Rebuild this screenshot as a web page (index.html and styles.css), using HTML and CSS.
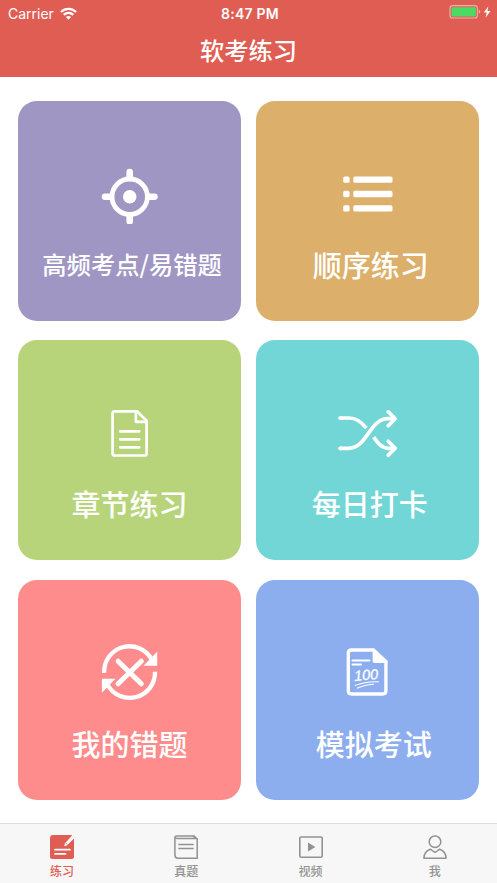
FILE: index.html
```html
<!DOCTYPE html>
<html lang="zh-CN">
<head>
  <meta charset="UTF-8">
  <meta name="viewport" content="width=device-width, initial-scale=1">
  <title>软考练习</title>
  <link rel="stylesheet" href="styles.css">
</head>
<body>
  <header>
    <div class="status">
      <div class="carrier">
        <span>Carrier</span>
        <svg class="wifi" width="17" height="13" viewBox="0 0 17 13" fill="none" stroke="#fff" stroke-width="2.3">
          <path d="M1 5C5.2 .9 11.8 .9 16 5"/>
          <path d="M3.8 7.9c2.6-2.6 6.8-2.6 9.4 0"/>
          <path d="M5.9 10.1c1.4-1.5 3.8-1.5 5.2 0L8.5 12.8z" fill="#fff" stroke="none"/>
        </svg>
      </div>
      <b>8:47 PM</b>
      <div class="power">
        <svg width="43" height="16" viewBox="0 0 43 16">
          <rect x="1" y="1.6" width="27.4" height="12.4" rx="2.6" fill="none" stroke="#fff" stroke-opacity=".5" stroke-width="1.1"/>
          <rect x="2.5" y="3.2" width="24.4" height="9.2" rx="1" fill="#4cd964"/>
          <path d="M29.8 5.8q1.6.5 1.6 2t-1.6 2z" fill="#fff" fill-opacity=".5"/>
          <path d="M39.3 2.2L34.8 8.6h3l-1.3 5.2 5-6.9h-3.1z" fill="#fff"/>
        </svg>
      </div>
    </div>
    <h1>软考练习</h1>
  </header>

  <main>
    <a class="card purple">
      <svg class="icon" viewBox="0 0 60 60" fill="none" stroke="#fff">
        <circle cx="29.7" cy="32.7" r="17.7" stroke-width="4.8"/>
        <circle cx="29.7" cy="32.7" r="6.8" fill="#fff" stroke="none"/>
        <path d="M29.7 8v6M29.7 51.4v6M5 32.7h6M48.4 32.7h6" stroke-width="6.6" stroke-linecap="round"/>
      </svg>
      <span class="small">高频考点/易错题</span>
    </a>
    <a class="card orange">
      <svg class="icon" viewBox="0 0 60 60" fill="#fff">
        <rect x="5.2" y="12.4" width="6.4" height="6.4" rx="1.6"/>
        <rect x="15.3" y="12.4" width="39.2" height="6.4" rx="1.6"/>
        <rect x="5.2" y="26.8" width="6.4" height="6.4" rx="1.6"/>
        <rect x="15.3" y="26.8" width="39.2" height="6.4" rx="1.6"/>
        <rect x="5.2" y="41.2" width="6.4" height="6.4" rx="1.6"/>
        <rect x="15.3" y="41.2" width="39.2" height="6.4" rx="1.6"/>
      </svg>
      <span class="order">顺序练习</span>
    </a>
    <a class="card green">
      <svg class="icon" viewBox="0 0 60 60" fill="none" stroke="#fff" stroke-width="2.7" stroke-linejoin="round" stroke-linecap="round">
        <path d="M36.9 8.3H14.7q-2.1 0-2.1 2.1V50.400q0 2.100 2.100 2.100h29.8q2.100 0 2.100-2.100V17.800z"/>
        <path d="M35.900 8.400v10.400h10.400"/>
        <path d="M20.200 28.300h19M20.200 36.300h19M20.200 44.300h19"/>
      </svg>
      <span>章节练习</span>
    </a>
    <a class="card cyan">
      <svg class="icon" viewBox="0 0 60 60" fill="none" stroke="#fff" stroke-width="3.7">
        <path d="M2 15h9c7.5 0 12.5 4 17.4 10.2"/>
        <path d="M2 45.300h9C29 45.300 31.500 15.700 50 15.700h6.500"/>
        <path d="M35.700 34.200C39.500 39.400 43.500 45.300 50 45.300h6.500"/>
        <path d="M50.200 8.700l7 7-7 7M50.200 38.300l7 7-7 7" stroke-linecap="round" stroke-linejoin="round"/>
        <path d="M2 15h1M2 45.300h1" stroke-linecap="round"/>
      </svg>
      <span class="daily">每日打卡</span>
    </a>
    <a class="card pink">
      <svg class="icon" viewBox="0 0 60 60" fill="none" stroke="#fff" stroke-width="4.3">
        <path d="M4.2 29.8A25.3 25.3 0 0 1 51.7 16.5"/>
        <path d="M55 28.7A25.3 25.3 0 0 1 7.4 41.5"/>
        <path d="M57.2 8.7v14H43.5zM1.9 35.7h13.6L1.9 49.7z" fill="#fff" stroke="none"/>
        <path d="M18.1 18.2l23.2 22.6M41.3 18.2L18.1 40.8" stroke-width="5" stroke-linecap="round"/>
      </svg>
      <span>我的错题</span>
    </a>
    <a class="card blue">
      <svg class="icon" viewBox="0 0 60 60" fill="none" stroke="#fff" stroke-width="3.3">
        <path d="M35.5 7H13.5q-3.2 0-3.2 3.2v37.6q0 3.2 3.2 3.2h31.2q3.2 0 3.2-3.2V18.5"/>
        <path d="M34.6 5.3h1.4L49.6 17.7V20H36.6q-2 0-2-2z" fill="#fff" stroke="none"/>
        <path d="M14.5 17.4h17M14.5 21.5h8.5" stroke-width="2" stroke-linecap="round"/>
        <text class="score" x="16.5" y="38" transform="rotate(-5 17 38)">100</text>
        <path d="M17 42.6q11-4.5 24-3.8M19 45.2q9.5-4 17-4" stroke-width="1.1"/>
      </svg>
      <span class="exam">模拟考试</span>
    </a>
  </main>

  <nav>
    <a class="tab active">
      <svg viewBox="0 0 24 24">
        <path d="M3 0h18.500L24 3v18.500q0 2.500-2.500 2.500h-19Q0 24 0 21.500V3Q0 0 3 0z" fill="#e05d53"/>
        <path d="M14.200 11.200l.6-2.800L22 .6l2-.6v3.500l-7 7z" fill="#f7f7f7"/>
        <path d="M16 8.200l1.500 1.500" stroke="#e05d53" stroke-width=".8"/>
        <path d="M5 14.700h15M5 18.900h10.500" stroke="#fff" stroke-width="1.7" stroke-linecap="round"/>
      </svg>
      <span>练习</span>
    </a>
    <a class="tab">
      <svg viewBox="0 0 24 24" fill="none" stroke="#929292" stroke-width="1.5">
        <path d="M23.2 3.2v20H4Q.9 23.2.9 20V2.6Q.9.9 2.6.9h17.6l2 2.3"/>
        <path d="M1 2.2q.4 1.2 2 1.2h20.2M20.2 1v2"/>
        <path d="M4.3 9.6h15.4M4.3 13.6h15.4"/>
      </svg>
      <span>真题</span>
    </a>
    <a class="tab">
      <svg viewBox="0 0 24 24" fill="none" stroke="#929292" stroke-width="1.6">
        <rect x=".8" y="2" width="22.4" height="20.2" rx="1.3"/>
        <path d="M9 7.6v9l7.4-4.5z" fill="#929292" stroke="none"/>
      </svg>
      <span>视频</span>
    </a>
    <a class="tab">
      <svg viewBox="0 0 24 24" fill="none" stroke="#929292" stroke-width="1.5">
        <circle cx="12" cy="6.7" r="5.8"/>
        <path d="M7.3 14.2Q.9 16.5.9 23.2h22.2q0-6.7-6.4-9L12 17.5z" stroke-linejoin="round"/>
      </svg>
      <span>我</span>
    </a>
  </nav>
</body>
</html>
```

FILE: styles.css
```css
* { box-sizing:border-box; margin:0; padding:0 }
body {
  height:883px;
  display:flex; flex-direction:column;
  font-family:'Noto Sans CJK SC', sans-serif;
  background:#fff; overflow:hidden;
}

header { height:77px; background:#e05d53; color:#fff }
.status {
  display:grid; grid-template-columns:1fr auto 1fr; align-items:center;
  height:26px; padding:0 5px 0 8px;
  font-family:Inter, sans-serif; font-size:14px;
}
.status b { font-weight:600; letter-spacing:.25px }
.carrier { display:flex; align-items:center; gap:6px }
.carrier span { font-weight:400 }
.power { display:flex; justify-content:flex-end; margin-top:-2px }
h1 { font-size:24.3px; font-weight:500; line-height:47px; text-align:center }

main {
  flex:1;
  display:grid; grid-template-columns:1fr 1fr; grid-template-rows:repeat(3, 220px);
  align-content:start; gap:19.4px 15.5px;
  padding:24px 18px 0 18.3px;
}
.card {
  display:flex; flex-direction:column; align-items:center;
  padding-top:63px; border-radius:19px; color:#fff;
}
.icon { width:60px; height:60px }
.card span { margin-top:18px; font-size:29px; line-height:44px; font-weight:500; white-space:nowrap }
.card .small { font-size:24.3px; padding-left:5px }
.card .order { padding-left:6px }
.card .daily { padding-left:4px }
.card .exam { padding-left:12px }
.purple { background:#9f96c3 }
.orange { background:#dcaf6a }
.green { background:#b8d47a }
.cyan { background:#73d6d6 }
.pink { background:#ff8c8c }
.blue { background:#8caeef }
.score {
  font:italic 14.5px 'Liberation Sans', sans-serif;
  fill:#fff; stroke:#fff; stroke-width:.3px;
}

nav {
  display:flex; height:60px;
  background:#f7f7f7; border-top:1px solid #dcdcdc;
}
.tab {
  flex:1;
  display:flex; flex-direction:column; align-items:center;
  padding-top:11px; color:#929292;
}
.tab svg { width:24px; height:24px }
.tab span { font-size:12px; line-height:18px; margin-top:3px; font-weight:500 }
.active { color:#e05d53 }
```
